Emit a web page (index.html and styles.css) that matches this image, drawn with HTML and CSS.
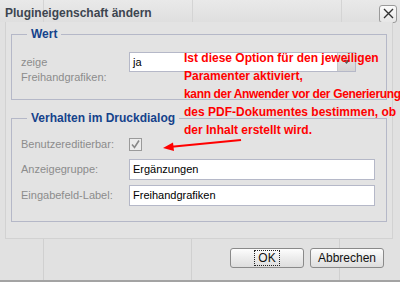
FILE: index.html
```html
<!doctype html>
<html>
<head>
  <title>Plugineigenschaft ändern</title>
  <link rel="stylesheet" href="styles.css">
</head>
<body>
  <div class="window">
    <div class="header">
      <span class="title">Plugineigenschaft ändern</span>
      <span class="close">
        <svg width="11" height="11" viewBox="0 0 11 11">
          <path d="M1 1 L10 10 M10 1 L1 10" stroke="#333" stroke-width="1.4" fill="none"/>
        </svg>
      </span>
    </div>
    <div class="panel">
      <fieldset class="group">
        <legend>Wert</legend>
        <div class="row">
          <label class="lbl">zeige<br>Freihandgrafiken:</label>
          <div class="combo">
            <span class="value">ja</span>
            <span class="trigger">
              <svg width="9" height="5" viewBox="0 0 9 5"><path d="M1 0 L4.5 4 L8 0 Z" fill="#555"/></svg>
            </span>
          </div>
        </div>
      </fieldset>
      <fieldset class="group group-second">
        <legend>Verhalten im Druckdialog</legend>
        <div class="row row-check">
          <label class="lbl">Benutzereditierbar:</label>
          <span class="check">
            <svg width="11" height="11" viewBox="0 0 11 11"><path d="M2 5.5 L4.5 8.5 L9 1.5" stroke="#888" stroke-width="1.6" fill="none"/></svg>
          </span>
        </div>
        <div class="row">
          <label class="lbl">Anzeigegruppe:</label>
          <div class="field">Ergänzungen</div>
        </div>
        <div class="row">
          <label class="lbl">Eingabefeld-Label:</label>
          <div class="field">Freihandgrafiken</div>
        </div>
      </fieldset>
    </div>
    <div class="footer">
      <button class="btn"><span class="focus">OK</span></button>
      <button class="btn">Abbrechen</button>
    </div>

    <div class="note">
      Ist diese Option für den jeweiligen<br>
      Paramenter aktiviert,<br>
      <span class="tight">kann der Anwender vor der Generierung</span><br>
      des PDF-Dokumentes bestimmen, ob<br>
      der Inhalt erstellt wird.
    </div>
    <svg class="arrow" width="90" height="20" viewBox="0 0 90 20">
      <path d="M80 3 L8 10" stroke="#f00" stroke-width="2.2" fill="none"/>
      <path d="M2 11 L12 5.5 L13 14 Z" fill="#f00"/>
    </svg>
  </div>
</body>
</html>
```
FILE: styles.css
```css
body {
  margin: 0;
  font-family: "Liberation Sans", Arial, sans-serif;
  font-size: 11px;
}

.window {
  position: relative;
  box-sizing: border-box;
  width: 400px;
  height: 282px;
  display: flex;
  flex-direction: column;
  background: #e1e1e1;
  border-bottom: 2px solid #a3a3a3;
  overflow: hidden;
}

/* title bar */
.header {
  flex: none;
  box-sizing: border-box;
  height: 22px;
  display: flex;
  align-items: center;
  justify-content: space-between;
  padding: 0 3px 0 5px;
  background:
    linear-gradient(90deg, transparent 43px, #d4d4d4 43px, #d4d4d4 44px, transparent 44px,
                    transparent 192px, #d4d4d4 192px, #d4d4d4 193px, transparent 193px,
                    transparent 341px, #d4d4d4 341px, #d4d4d4 342px, transparent 342px),
    linear-gradient(#e9e9e9, #dfdfdf);
}
.title {
  font-size: 12px;
  font-weight: bold;
  color: #3d4550;
  padding-top: 3px;
}
.close {
  display: flex;
  align-items: center;
  justify-content: center;
  width: 16px;
  height: 16px;
  margin-top: 5px;
  border: 1px solid #9a9a9a;
  border-radius: 3px;
  background: linear-gradient(#fbfbfb, #e6e6e6);
}

/* body panel */
.panel {
  flex: none;
  box-sizing: border-box;
  height: 217px;
  margin: 0 7px 0 5px;
  padding: 4px 5px 0;
  border: 1px solid #d2d2d2;
  border-top: 0;
  background: #e3e3e3;
}
.group {
  margin: 0;
  padding: 10px 9px 14px;
  border: 1px solid #b5b8c8;
}
.group legend {
  margin-left: 6px;
  padding: 0 4px;
  font-size: 12px;
  font-weight: bold;
  color: #15428b;
  line-height: 16px;
}
.group-second {
  margin-top: 10px;
  padding-top: 8px;
  padding-bottom: 15px;
}
.row {
  display: flex;
  align-items: flex-start;
}
.row + .row {
  margin-top: 5px;
}
.lbl {
  flex: none;
  width: 108px;
  color: #8c8c8c;
  line-height: 15px;
  padding-top: 3px;
}
.row-check {
  height: 20px;
  align-items: center;
}
.row-check .lbl {
  padding-top: 0;
}
.check {
  display: flex;
  align-items: center;
  justify-content: center;
  width: 11px;
  height: 11px;
  border: 1px solid #9a9a9a;
  background: #ececec;
}

.combo, .field {
  box-sizing: border-box;
  height: 21px;
  border: 1px solid #b5b8c8;
  background: #fff;
  color: #000;
  line-height: 19px;
}
.combo {
  width: 227px;
  height: 20px;
  display: flex;
  justify-content: space-between;
}
.combo .value {
  padding-left: 3px;
}
.trigger {
  width: 17px;
  display: flex;
  align-items: center;
  justify-content: center;
  border-left: 1px solid #c8c8c8;
  background: linear-gradient(#e8e8e8, #d4d4d4);
}
.field {
  width: 246px;
  padding-left: 3px;
}

/* buttons */
.footer {
  flex: 1;
  display: flex;
  justify-content: flex-end;
  align-items: flex-start;
  gap: 6px;
  padding: 9px 16px 0 0;
  background:
    linear-gradient(90deg, transparent 43px, #d0d0d0 43px, #d0d0d0 44px, transparent 44px,
                    transparent 191px, #d0d0d0 191px, #d0d0d0 192px, transparent 192px,
                    transparent 339px, #d0d0d0 339px, #d0d0d0 340px, transparent 340px);
}
.btn {
  width: 74px;
  height: 20px;
  padding: 0;
  border: 1px solid #8a8a8a;
  border-radius: 3px;
  background: linear-gradient(#fdfdfd, #ececec 50%, #dedede);
  font-family: "Liberation Sans", Arial, sans-serif;
  font-size: 12px;
  color: #111;
}
.focus {
  padding: 0 3px;
  outline: 1px dotted #222;
}

/* annotation over the dialog */
.note {
  position: absolute;
  left: 184px;
  top: 49px;
  color: #f00;
  font-weight: bold;
  font-size: 12px;
  line-height: 18px;
  white-space: nowrap;
}
.tight {
  letter-spacing: -0.35px;
}
.arrow {
  position: absolute;
  left: 161px;
  top: 137px;
}
```
